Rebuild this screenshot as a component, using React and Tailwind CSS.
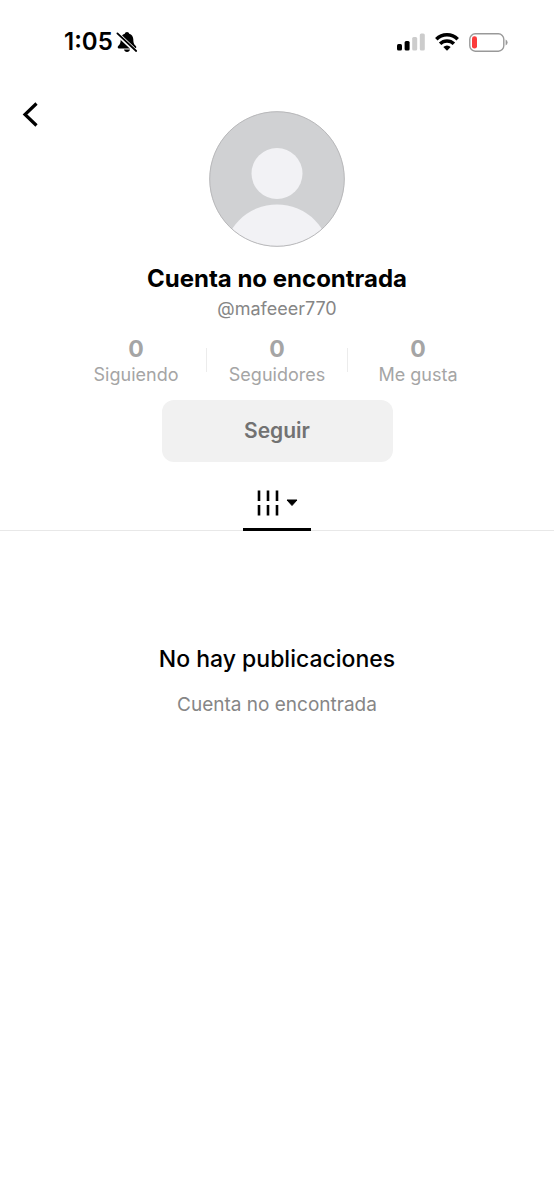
const stats = [
  { label: "Siguiendo", value: 0 },
  { label: "Seguidores", value: 0 },
  { label: "Me gusta", value: 0 }
];

function BellOffIcon() {
  return (
    <svg width="22" height="22" viewBox="0 0 22 22" aria-hidden="true">
      <path
        d="M11 1C9.8 1 9 1.8 8.8 2.7C6.2 3.5 4.8 5.6 4.7 8.3C4.6 12 4.1 13.2 2.2 15C1.3 15.9 1.6 17.4 3 17.4H19C20.4 17.4 20.7 15.9 19.8 15C17.9 13.2 17.4 12 17.3 8.3C17.2 5.6 15.8 3.5 13.2 2.7C13 1.8 12.2 1 11 1Z"
        fill="#000"
      />
      <path d="M8 18.6H14C13.7 20.2 12.6 21 11 21S8.3 20.2 8 18.6Z" fill="#000" />
      <path d="M1 2.5L20 20.5" stroke="#fff" strokeWidth="4.2" />
      <path d="M1.4 2.4L20.2 20" stroke="#000" strokeWidth="1.8" strokeLinecap="round" />
    </svg>
  );
}

function SignalIcon() {
  return (
    <svg width="28" height="18" viewBox="0 0 28 18" aria-hidden="true">
      <rect x="0" y="11" width="5" height="6.5" rx="1.5" fill="#000" />
      <rect x="7.6" y="8" width="5" height="9.5" rx="1.5" fill="#000" />
      <rect x="15.2" y="4" width="5" height="13.5" rx="1.5" fill="#ccc" />
      <rect x="22.8" y="0.5" width="5" height="17" rx="1.5" fill="#ccc" />
    </svg>
  );
}

function WifiIcon() {
  return (
    <svg width="24" height="18" viewBox="0 0 24 18" fill="none" stroke="#000" strokeWidth="3.5" aria-hidden="true">
      <path d="M1.3 6.2A15.2 15.2 0 0 1 22.7 6.2" />
      <path d="M5.1 10.8A9.8 9.8 0 0 1 18.9 10.8" />
      <path d="M12 17.8L8.3 14.1A5.3 5.3 0 0 1 15.7 14.1Z" fill="#000" stroke="none" />
    </svg>
  );
}

function BatteryIcon() {
  return (
    <svg width="39" height="19" viewBox="0 0 39 19" aria-hidden="true">
      <rect x="0.8" y="0.8" width="34" height="17.4" rx="5.4" fill="none" stroke="#999" strokeWidth="1.4" />
      <rect x="3" y="3.2" width="5" height="12.4" rx="2.4" fill="#fb3b3b" />
      <path d="M36.6 6.5Q38.6 7.4 38.6 9.5T36.6 12.5Z" fill="#999" />
    </svg>
  );
}

function StatusBar() {
  return (
    <div className="flex h-20 items-center justify-between pl-16 pr-[46px] pt-1">
      <div className="flex items-center gap-[3px]">
        <span className="text-2xl font-semibold">1:05</span>
        <BellOffIcon />
      </div>
      <div className="flex items-center gap-2.5">
        <SignalIcon />
        <WifiIcon />
        <BatteryIcon />
      </div>
    </div>
  );
}

function Avatar() {
  return (
    <svg width="136" height="136" viewBox="0 0 136 136" role="img" aria-label="Foto de perfil">
      <defs>
        <clipPath id="avatar-clip">
          <circle cx="68" cy="68" r="67.5" />
        </clipPath>
      </defs>
      <g clipPath="url(#avatar-clip)">
        <rect width="136" height="136" fill="#d0d1d3" />
        <circle cx="68" cy="62.5" r="25.5" fill="#f2f2f5" />
        <circle cx="68" cy="147" r="53.5" fill="#f2f2f5" />
      </g>
      <circle cx="68" cy="68" r="67.3" fill="none" stroke="#b8b8ba" strokeWidth="1" />
    </svg>
  );
}

function Stats() {
  return (
    <dl className="mt-3.5 flex w-full justify-center">
      {stats.map((stat, i) => (
        <div key={stat.label} className="flex w-[141px] items-center">
          <div className="flex flex-1 flex-col-reverse gap-0.5 text-center text-[#a5a5a5]">
            <dt className="text-lg leading-6">{stat.label}</dt>
            <dd className="text-[23px] font-bold leading-6">{stat.value}</dd>
          </div>
          {i < stats.length - 1 && <span className="-ml-px mb-1 h-6 w-px bg-[#ececec]" />}
        </div>
      ))}
    </dl>
  );
}

function Tabs() {
  return (
    <div role="tablist" className="mt-4 flex justify-center border-b border-[#e8e8e8]">
      <button
        type="button"
        role="tab"
        aria-selected="true"
        aria-label="Publicaciones"
        className="-mb-px flex h-[53px] w-[68px] items-center justify-center gap-1.5 border-b-3 border-black"
      >
        <svg width="24" height="26" viewBox="0 0 24 26" fill="none" stroke="#000" strokeWidth="2.6" aria-hidden="true">
          <path d="M3 0.5V11M12 0.5V11M21 0.5V11M3 15V25.5M12 15V25.5M21 15V25.5" />
        </svg>
        <svg width="12" height="8" viewBox="0 0 12 8" aria-hidden="true">
          <path d="M1 1H11L6 6.5Z" stroke="#000" strokeWidth="1" strokeLinejoin="round" />
        </svg>
      </button>
    </div>
  );
}

export default function App() {
  return (
    <div className="min-h-screen bg-white font-['Inter',sans-serif] text-black">
      <StatusBar />
      <header className="grid grid-cols-[1fr_auto_1fr] items-start pt-[31px]">
        <button type="button" aria-label="Volver" className="-mt-3 ml-3.5 flex size-8 items-center justify-center">
          <svg width="16" height="26" viewBox="0 0 16 26" fill="none" stroke="#000" strokeWidth="3.2" aria-hidden="true">
            <path d="M14.5 1.5L3 12.5L14.5 23.5" />
          </svg>
        </button>
        <Avatar />
      </header>
      <main>
        <section className="flex flex-col items-center">
          <h1 className="mt-4 text-2xl font-bold">Cuenta no encontrada</h1>
          <p className="text-lg text-[#868686]">@mafeeer770</p>
          <Stats />
          <button type="button" className="mt-[13px] h-[62px] w-[231px] rounded-xl bg-[#f1f1f1] text-[21px] font-semibold text-[#727272]">
            Seguir
          </button>
        </section>
        <Tabs />
        <section className="px-8 pt-28 text-center">
          <h2 className="text-[23px] font-medium leading-8">No hay publicaciones</h2>
          <p className="mt-4 text-[19px] leading-7 text-[#868686]">Cuenta no encontrada</p>
        </section>
      </main>
    </div>
  );
}
